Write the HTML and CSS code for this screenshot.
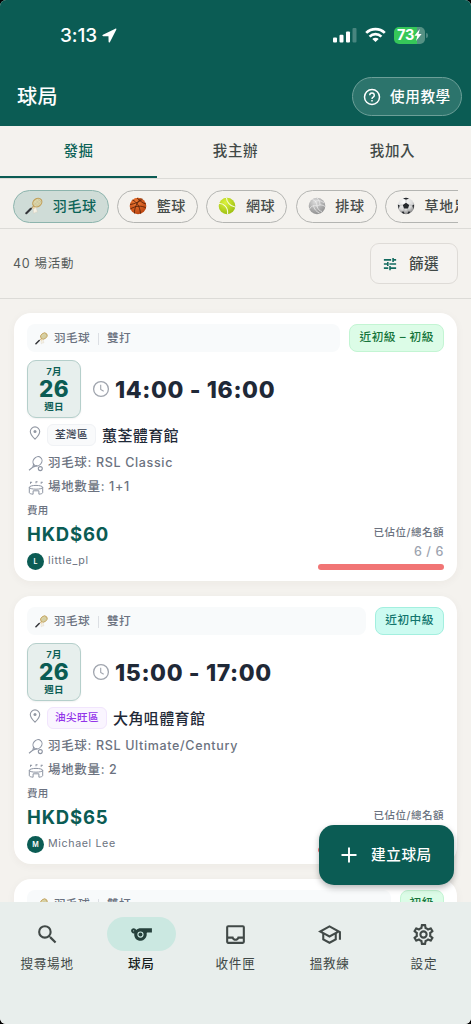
FILE: index.html
```html
<!DOCTYPE html>
<html lang="zh-Hant-HK">
<head>
<meta charset="utf-8">
<meta name="viewport" content="width=device-width, initial-scale=1">
<title>球局</title>
<link rel="stylesheet" href="styles.css">
</head>
<body>
<svg class="defs" width="0" height="0" aria-hidden="true">
  <defs>
    <radialGradient id="gBasket" cx=".4" cy=".3" r=".75"><stop offset="0" stop-color="#f07a35"/><stop offset="1" stop-color="#b8410c"/></radialGradient>
    <radialGradient id="gTennis" cx=".4" cy=".3" r=".8"><stop offset="0" stop-color="#dcf23c"/><stop offset="1" stop-color="#96b90c"/></radialGradient>
    <radialGradient id="gVolley" cx=".4" cy=".25" r=".8"><stop offset="0" stop-color="#dcdcdc"/><stop offset="1" stop-color="#8c8c8c"/></radialGradient>
    <radialGradient id="gSoccer" cx=".4" cy=".25" r=".8"><stop offset="0" stop-color="#fff"/><stop offset=".6" stop-color="#d9d9d9"/><stop offset="1" stop-color="#777"/></radialGradient>
    <symbol id="racket" viewBox="0 0 18 18">
      <path d="M8.7 9.200 6 11.600" stroke="#a08b5b" stroke-width="1.100"/>
      <path d="M5.800 11.800 1.300 16.200" stroke="#34363a" stroke-width="2.100" stroke-linecap="round"/>
      <ellipse cx="12.300" cy="5.600" rx="4.900" ry="3.900" transform="rotate(-38 12.300 5.600)" fill="#ddd6a8" stroke="#c2a05a" stroke-width="1.200"/>
      <path d="m9 5.500 4 4M11 3.500l4 4M13 2l3.200 3.200M9.400 8 15 2.400M11.500 9l5-5" stroke="#b9b492" stroke-width=".4"/>
      <path d="m8.200 11.200 3-.6 1.200 4.400-2 .4-1.800 1z" fill="#f5f1e5" stroke="#d4cbb8" stroke-width=".4"/>
      <circle cx="8.700" cy="10.800" r="1.100" fill="#efcf9a"/>
    </symbol>
    <symbol id="clock" viewBox="0 0 18 18"><circle cx="9" cy="9" r="7.400" fill="none" stroke="#a0a5ae" stroke-width="1.300"/><path d="M8.700 4.700v4.800l3 1.700" fill="none" stroke="#a0a5ae" stroke-width="1.100"/></symbol>
    <symbol id="pin" viewBox="0 0 12 15"><path d="M6 .9a4.700 4.700 0 0 0-4.700 4.700C1.300 8.800 6 13.200 6 13.200s4.700-4.400 4.700-7.600A4.700 4.700 0 0 0 6 .9z" fill="none" stroke="#9298a3" stroke-width="1.100"/><circle cx="6" cy="5.500" r="1.500" fill="#9298a3"/></symbol>
    <symbol id="gear-racket" viewBox="0 0 16 16"><g fill="none" stroke="#8d94a2" stroke-width="1.100"><ellipse cx="9.500" cy="5.300" rx="4.900" ry="4.200" transform="rotate(-50 9.500 5.300)"/><path d="M5.700 7.800 4.800 11.200 1 14.200M4.800 11.200l4.400-1.700"/><circle cx="12.300" cy="12.600" r="2"/></g></symbol>
    <symbol id="stadium" viewBox="0 0 16 16"><g fill="none" stroke="#8d94a2" stroke-width="1"><ellipse cx="8" cy="7.300" rx="6.700" ry="1.900"/><path d="M1.300 7.300v5.200c0 .9 1.500 1.500 3.800 1.700v-3.400h5.800v3.400c2.300-.2 3.800-.8 3.800-1.700V7.300M2.500 1.800v2M8 1.300v2M13.200 1.800v2M2.500 2.300h1.600M8 1.800h1.600M13.200 2.300h1.600"/></g></symbol>
  </defs>
</svg>
<div class="screen">
  <header class="top">
    <div class="status">
      <div class="status-time">3:13
        <svg width="15" height="15" viewBox="0 0 16 16"><path d="M14.200.7 1 7.300c-1 .6-.7 1.500.4 1.500l5.500.1.1 5.600c0 1.100 1 1.300 1.500.4L15.200 1.800c.4-.9-.2-1.500-1-1.100z" fill="#fff"/></svg>
      </div>
      <div class="status-icons">
        <svg width="24" height="16" viewBox="0 0 24 16" fill="#fff"><rect x="0" y="10.500" width="4" height="5" rx="1"/><rect x="6.500" y="7.700" width="4" height="7.800" rx="1"/><rect x="13" y="4.500" width="4" height="11" rx="1"/><rect x="19.500" y="1" width="4" height="14.500" rx="1" opacity=".25"/></svg>
        <svg class="wifi" width="21" height="16" viewBox="0 0 21 16" fill="none" stroke="#fff" stroke-width="2.700"><path d="M1.200 5.900a13.300 13.300 0 0 1 18.600 0M4.600 9.600a8.500 8.500 0 0 1 11.800 0"/><path d="M10.500 15 7.300 12a4.600 4.600 0 0 1 6.400 0z" fill="#fff" stroke="none"/></svg>
        <div class="battery"><span>73</span><svg width="8" height="12" viewBox="0 0 8 12"><path d="M5.800 0 .4 6.700h2.900L2 12l5.600-7H4.500z" fill="#fff"/></svg></div>
        <i class="battery-tip"></i>
      </div>
    </div>
    <div class="appbar">
      <h1>球局</h1>
      <button class="help">
        <svg width="18" height="18" viewBox="0 0 18 18" fill="none" stroke="#fff" stroke-width="1.500"><circle cx="9" cy="9" r="7.500"/><path d="M6.700 7.200a2.300 2.300 0 1 1 3.500 2c-.8.500-1.200.9-1.200 1.800"/><path d="M9 12v1.600"/></svg>
        <span>使用教學</span>
      </button>
    </div>
  </header>
  <nav class="tabs"><span class="tab active">發掘</span><span class="tab">我主辦</span><span class="tab">我加入</span></nav>
  <div class="chips">
    <div class="chip-track">
      <span class="chip selected"><svg width="18" height="18"><use href="#racket"/></svg>羽毛球</span>
      <span class="chip"><svg width="18" height="18" viewBox="0 0 18 18"><circle cx="9" cy="9" r="8.300" fill="url(#gBasket)"/><path d="M3.500 3c4 1.500 7.500 6.500 8 13.700M8 .9C11 4 14.500 6.500 17 7M1 7.500C6 7 11.500 4 13.500 2.100M1.300 12C6 9 12.500 8 17 11M5.500 16.500C5 12 8 5 12 1.500" fill="none" stroke="#4e1d08" stroke-width=".8"/></svg>籃球</span>
      <span class="chip"><svg width="18" height="18" viewBox="0 0 18 18"><circle cx="9" cy="9" r="8.300" fill="url(#gTennis)"/><path d="M1 6.500c4.500-.5 9.500 4 8.500 10.500M8.500 1c0 3.500 3.500 8.500 8.500 9" fill="none" stroke="#f6fbd8" stroke-width="1.100"/></svg>網球</span>
      <span class="chip"><svg width="18" height="18" viewBox="0 0 18 18"><circle cx="9" cy="9" r="8.300" fill="url(#gVolley)"/><path d="M9 9C6 8 3 9 1.500 12M9 9c0-3-1.500-5.500-4.500-6.500M9 9c2.500-1.500 5.500-1.500 8 .5M7 4.500C10 3 13 3.500 16 6M12 8c0-3-1-5-3-7M5.500 8.500c.5 3.500 2.500 6 6 7.500M9 9c.5 3 2.500 5 5 5.500" fill="none" stroke="#f0f0f0" stroke-width=".7"/></svg>排球</span>
      <span class="chip"><svg width="18" height="18" viewBox="0 0 18 18"><circle cx="9" cy="9" r="8.300" fill="url(#gSoccer)"/><path d="m9 5.700 3.200 2.200-1.200 3.700H7L5.800 7.900zM6 1.400 9 2.700l3-1.300A8 8 0 0 0 6 1.400zM.8 7.500l2 .9L1.600 12zM17.200 7.500l-2 .9 1.200 3.600zM4.500 14.700l2.300-.1.800 2.500c-1.300-.3-2.300-1.100-3.100-2.400zM13.500 14.700l-2.300-.1-.8 2.500c1.300-.3 2.300-1.100 3.100-2.400z" fill="#25282c"/><path d="M9 2.500v3.200M3 8.300l2.800-.4M15 8.300l-2.800-.4M7 11.600v2.800M11 11.600v2.800" stroke="#999" stroke-width=".5"/></svg>草地足球</span>
    </div>
  </div>
  <div class="toolbar">
    <span class="count">40 場活動</span>
    <button class="filter"><svg width="14" height="14" viewBox="0 0 16 16" fill="none" stroke="#126a5f" stroke-width="1.800"><path d="M1 3.300h8.300M11.500 1v4.600M11.500 3.300H15M1 8h3.800M5.500 5.700v4.600M7.300 8H15M1 12.700h5M8 10.400V15M8 12.700h7"/></svg><span>篩選</span></button>
  </div>
  <main class="list">
    <article class="card">
      <div class="card-head"><div class="kind"><svg width="13" height="13"><use href="#racket"/></svg><span>羽毛球</span><i></i><span>雙打</span></div><span class="level green">近初級 – 初級</span></div>
      <div class="when"><div class="date"><span>7月</span><b>26</b><span>週日</span></div><svg width="18" height="18"><use href="#clock"/></svg><strong>14:00 - 16:00</strong></div>
      <div class="place"><svg width="12" height="15"><use href="#pin"/></svg><span class="district">荃灣區</span><span class="venue">蕙荃體育館</span></div>
      <div class="info"><svg width="16" height="16"><use href="#gear-racket"/></svg><span>羽毛球: RSL Classic</span></div>
      <div class="info"><svg width="16" height="16"><use href="#stadium"/></svg><span>場地數量: 1+1</span></div>
      <div class="foot">
        <div class="fee"><span class="small">費用</span><span class="price">HKD$60</span><div class="host"><span class="avatar">L</span><span>little_pl</span></div></div>
        <div class="seats"><span class="small">已佔位/總名額</span><span class="num">6 / 6</span><span class="bar"></span></div>
      </div>
    </article>
    <article class="card">
      <div class="card-head"><div class="kind"><svg width="13" height="13"><use href="#racket"/></svg><span>羽毛球</span><i></i><span>雙打</span></div><span class="level teal">近初中級</span></div>
      <div class="when"><div class="date"><span>7月</span><b>26</b><span>週日</span></div><svg width="18" height="18"><use href="#clock"/></svg><strong>15:00 - 17:00</strong></div>
      <div class="place"><svg width="12" height="15"><use href="#pin"/></svg><span class="district purple">油尖旺區</span><span class="venue">大角咀體育館</span></div>
      <div class="info"><svg width="16" height="16"><use href="#gear-racket"/></svg><span>羽毛球: RSL Ultimate/Century</span></div>
      <div class="info"><svg width="16" height="16"><use href="#stadium"/></svg><span>場地數量: 2</span></div>
      <div class="foot">
        <div class="fee"><span class="small">費用</span><span class="price">HKD$65</span><div class="host"><span class="avatar">M</span><span>Michael Lee</span></div></div>
        <div class="seats"><span class="small">已佔位/總名額</span><span class="num"></span><span class="bar"></span></div>
      </div>
    </article>
    <article class="card">
      <div class="card-head"><div class="kind"><svg width="13" height="13"><use href="#racket"/></svg><span>羽毛球</span><i></i><span>雙打</span></div><span class="level green">初級</span></div>
    </article>
  </main>
  <button class="fab"><svg width="16" height="16" viewBox="0 0 16 16"><path d="M8 .5v15M.5 8h15" stroke="#fff" stroke-width="1.900"/></svg><span>建立球局</span></button>
  <nav class="bottom">
    <a class="item"><span class="ico"><svg width="25" height="25" viewBox="0 0 24 24"><path fill="#414947" d="M15.500 14h-.79l-.28-.27A6.470 6.470 0 0 0 16 9.500 6.500 6.500 0 1 0 9.500 16c1.610 0 3.090-.59 4.230-1.570l.27.28v.79l5 4.990L20.490 19zm-6 0a4.500 4.500 0 1 1 0-9 4.500 4.500 0 0 1 0 9z"/></svg></span><span>搜尋場地</span></a>
    <a class="item current"><span class="ico"><svg width="25" height="25" viewBox="0 0 24 24"><path fill="#26413c" fill-rule="evenodd" d="M11.230 6c-1.660 0-3.220.66-4.360 1.730C6.540 6.730 5.610 6 4.500 6 3.120 6 2 7.120 2 8.500S3.120 11 4.500 11c.21 0 .41-.03.610-.08-.05.25-.09.51-.1.780-.18 3.680 2.950 6.680 6.680 6.270 2.550-.28 4.680-2.260 5.190-4.770.15-.71.150-1.400.060-2.060-.09-.6.380-1.130.990-1.130H22V6H11.230zM4.500 9a.5.5 0 1 1 0-1 .5.5 0 0 1 0 1zM11 15a3 3 0 1 1 0-6 3 3 0 0 1 0 6z"/><circle cx="11" cy="12" r="1.900" fill="#26413c"/></svg></span><span>球局</span></a>
    <a class="item"><span class="ico"><svg width="25" height="25" viewBox="0 0 24 24"><path fill="#414947" d="M19 3H5a2 2 0 0 0-2 2v14c0 1.100.9 2 2 2h14a2 2 0 0 0 2-2V5a2 2 0 0 0-2-2zm0 16H5v-3h3.560c.69 1.190 1.970 2 3.450 2s2.750-.81 3.450-2H19v3zm0-5h-4.990c0 1.100-.9 2-2 2s-2-.9-2-2H5V5h14v9z"/></svg></span><span>收件匣</span></a>
    <a class="item"><span class="ico"><svg width="25" height="25" viewBox="0 0 24 24"><path fill="#414947" d="M12 3 1 9l4 2.180v6L12 21l7-3.820v-6l2-1.090V17h2V9L12 3zm6.820 6L12 12.720 5.180 9 12 5.280 18.820 9zM17 15.990l-5 2.730-5-2.730v-3.720L12 15l5-2.730v3.720z"/></svg></span><span>搵教練</span></a>
    <a class="item"><span class="ico"><svg width="25" height="25" viewBox="0 0 24 24"><path fill="#414947" d="M19.430 12.980c.04-.32.070-.64.070-.98 0-.34-.03-.66-.07-.98l2.110-1.650c.19-.15.240-.42.120-.64l-2-3.460a.5.5 0 0 0-.61-.22l-2.490 1c-.52-.4-1.080-.73-1.690-.98l-.38-2.650A.488.488 0 0 0 14 2h-4c-.25 0-.46.180-.49.420l-.38 2.650c-.61.250-1.170.590-1.690.98l-2.490-1a.5.5 0 0 0-.61.220l-2 3.460c-.13.220-.07.490.120.640l2.110 1.650c-.04.320-.07.650-.07.980s.03.660.070.980l-2.110 1.650c-.19.150-.24.420-.12.640l2 3.460c.12.220.390.300.610.220l2.490-1c.52.400 1.080.730 1.690.980l.38 2.650c.03.240.240.420.490.420h4c.25 0 .46-.18.490-.42l.38-2.650c.61-.25 1.170-.59 1.690-.98l2.490 1c.23.090.49 0 .61-.22l2-3.460c.12-.22.070-.49-.12-.64l-2.110-1.650zm-1.980-1.710c.04.310.050.520.050.730 0 .21-.02.430-.05.730l-.14 1.130.89.700 1.080.84-.7 1.210-1.270-.51-1.040-.42-.9.680c-.43.320-.84.560-1.250.73l-1.060.43-.16 1.130-.2 1.350h-1.400l-.35-2.480-1.060-.43c-.43-.18-.83-.41-1.230-.71l-.91-.7-1.060.43-1.270.51-.7-1.210 1.080-.84.890-.7-.14-1.130A7.600 7.600 0 0 1 6.500 12c0-.2.020-.43.050-.73l.14-1.130-.89-.7-1.080-.84.7-1.210 1.270.51 1.040.42.900-.68c.43-.32.840-.56 1.250-.73l1.060-.43.160-1.130.2-1.350h1.390l.35 2.480 1.060.43c.43.180.830.410 1.230.71l.91.700 1.060-.43 1.270-.51.700 1.210-1.070.85-.89.700.14 1.130zM12 8a4 4 0 1 0 0 8 4 4 0 0 0 0-8zm0 6a2 2 0 1 1 0-4 2 2 0 0 1 0 4z"/></svg></span><span>設定</span></a>
  </nav>
</div>
</body>
</html>
```
FILE: styles.css
```css
* { box-sizing: border-box; }
body { margin: 0; background: #000; font-family: Inter, "Noto Sans CJK TC", sans-serif; line-height: 1; }
button { font: inherit; border: 0; margin: 0; padding: 0; }
svg { display: block; flex: none; }
span { white-space: nowrap; }
.defs { position: absolute; }
.screen { position: relative; width: 471px; height: 1024px; overflow: hidden; border-radius: 6px; background: #f4f2ee; display: flex; flex-direction: column; }

.top { height: 126px; flex: none; background: #0b5c54; color: #fff; }
.status { height: 67px; padding: 3px 43px 0 60px; display: flex; justify-content: space-between; align-items: center; }
.status-time { display: flex; align-items: center; gap: 5px; font-size: 19px; font-weight: 500; letter-spacing: -.1px; }
.status-icons { display: flex; align-items: center; }
.wifi { margin: 0 8px 0 8px; }
.battery { width: 31px; height: 17px; border-radius: 5px; background: linear-gradient(90deg, #36c759 74%, #559184 74%); display: flex; align-items: center; justify-content: center; font-size: 14.500px; font-weight: 700; letter-spacing: -.3px; }
.battery-tip { width: 2px; height: 5px; margin-left: 1px; border-radius: 0 2px 2px 0; background: #4b8780; }
.appbar { height: 59px; padding: 0 9px 0 17px; display: flex; align-items: center; justify-content: space-between; }
h1 { margin: 0; padding-top: 1px; font-size: 20px; font-weight: 500; letter-spacing: .4px; }
.help { width: 110px; height: 39px; border: 1px solid #6c9f98; border-radius: 20px; background: #2c746c; color: #fff; display: flex; align-items: center; padding: 1px 0 0 10px; gap: 9px; font-size: 14.600px; font-weight: 500; letter-spacing: .6px; }

.tabs { height: 53px; flex: none; display: grid; grid-template-columns: repeat(3, 1fr); border-bottom: 1px solid #dcdbd7; }
.tab { height: 52px; display: flex; align-items: center; justify-content: center; padding-top: 1px; font-size: 14.500px; font-weight: 500; letter-spacing: .6px; color: #414947; border-bottom: 2px solid transparent; }
.tab.active { color: #0b6357; border-color: #0b5c54; }

.chips { height: 50px; flex: none; padding: 0 13px; border-bottom: 1px solid #dcdbd7; }
.chip-track { height: 49px; display: flex; align-items: center; gap: 8.300px; overflow: hidden; padding-top: 5px; }
.chip { height: 33px; flex: none; border: 1px solid #b4b5b2; border-radius: 17px; padding: 0 11px; display: flex; align-items: center; gap: 9.800px; font-size: 14px; font-weight: 500; letter-spacing: .6px; color: #464c4a; }
.chip.selected { background: #cfdcd7; border-color: #8db4ad; color: #0b6357; }

.toolbar { height: 70px; flex: none; border-bottom: 1px solid #dcdbd7; padding: 0 13px; display: flex; align-items: center; justify-content: space-between; }
.count { padding-top: 2px; font-size: 12.500px; letter-spacing: .7px; color: #555b59; }
.filter { width: 88px; height: 41px; border: 1px solid #dedbd7; border-radius: 9px; background: #f5f3f0; display: flex; align-items: center; padding: 1px 0 0 12px; gap: 12px; font-size: 14.600px; font-weight: 500; letter-spacing: .4px; color: #414947; }

.list { padding: 14px 14px 0 14px; height: 603px; flex: none; overflow: hidden; }
.card { height: 268px; margin-bottom: 15px; border-radius: 17px; background: #fff; box-shadow: 0 2px 10px rgba(60, 45, 20, .045); padding: 11px 13px 0; }
.card-head { display: flex; gap: 9px; height: 28px; align-items: stretch; }
.kind { flex: 1; background: #f8fafb; border-radius: 8px; padding: 1px 0 0 8px; display: flex; align-items: center; font-size: 11.600px; font-weight: 500; letter-spacing: .4px; color: #6b7280; }
.kind svg { margin-right: 6px; }
.kind i { width: 1px; height: 12px; background: #dcdfe4; margin: 0 8px; }
.level { border-radius: 8px; padding: 0 9px; border: 1px solid; display: flex; align-items: center; font-size: 11.700px; font-weight: 500; letter-spacing: .5px; }
.green { background: #dcfce7; border-color: #c3f5d3; color: #16753b; }
.teal { background: #ccfbf1; border-color: #a3efdf; color: #12766e; }
.when { height: 58px; margin-top: 8px; display: flex; align-items: center; }
.when svg { margin: 0 5px 0 11px; }
.when strong { padding-top: 2px; font-size: 23px; font-weight: 800; letter-spacing: .62px; color: #1f2937; }
.date { width: 54px; height: 58px; border: 1px solid #b5cfcb; border-radius: 9px; background: #e7efed; color: #0b5c54; display: flex; flex-direction: column; align-items: center; padding-top: 5px; font-size: 9.500px; font-weight: 600; letter-spacing: .3px; box-shadow: 0 1px 2px rgba(0, 0, 0, .06); }
.date span { height: 11px; line-height: 11px; }
.date b { font-size: 22.500px; line-height: 24px; font-weight: 800; }
.place { height: 33px; display: flex; align-items: center; padding: 1px 0 0 2px; }
.place svg { margin: -4px 6px 0 0; }
.district { height: 22px; border: 1px solid #f0f2f5; border-radius: 6px; background: #f9fafb; color: #374151; padding: 1px 7px 0; display: flex; align-items: center; font-size: 10.600px; font-weight: 500; letter-spacing: .4px; margin-right: 6px; }
.purple { background: #faf5ff; border-color: #f1e5fd; color: #9333ea; }
.venue { font-size: 15px; font-weight: 500; letter-spacing: .4px; color: #1f2937; }
.info { height: 25px; display: flex; align-items: center; gap: 4px; font-size: 12.500px; font-weight: 450; letter-spacing: .66px; color: #6b7280; padding-left: 1px; }
.info:nth-of-type(5) { margin-top: -1px; margin-bottom: 1px; }
.foot { display: flex; justify-content: space-between; }
.small { font-size: 10.500px; font-weight: 500; letter-spacing: .35px; color: #6b7280; }
.fee { display: flex; flex-direction: column; }
.fee .small { height: 20px; line-height: 20px; }
.price { height: 26px; line-height: 26px; font-size: 18.500px; font-weight: 700; letter-spacing: .85px; color: #0b5c54; }
.host { height: 28px; display: flex; align-items: center; gap: 4px; font-size: 10.700px; letter-spacing: .62px; color: #6b7280; }
.avatar { width: 17px; height: 17px; border-radius: 50%; background: #0b5c54; color: #fff; font-size: 7px; font-weight: 600; letter-spacing: 0; display: flex; align-items: center; justify-content: center; }
.seats { width: 126px; display: flex; flex-direction: column; align-items: flex-end; padding-top: 21px; }
.seats .small { height: 21px; line-height: 21px; letter-spacing: .5px; }
.num { height: 20px; line-height: 18px; font-size: 12.500px; font-weight: 500; letter-spacing: .6px; color: #9ca3af; }
.bar { width: 126px; height: 6px; border-radius: 3px; background: #f17575; margin-top: 1px; }

.fab { position: absolute; left: 319px; top: 825px; width: 135px; height: 60px; border-radius: 15px; background: #0b5c54; color: #fff; box-shadow: 0 3px 6px rgba(0, 0, 0, .28); display: flex; align-items: center; padding-left: 22px; gap: 14px; font-size: 14.600px; font-weight: 500; letter-spacing: .6px; }

.bottom { height: 122px; flex: none; background: #e8eeec; display: grid; grid-template-columns: repeat(5, 1fr); align-items: start; padding-top: 15px; }
.item { display: flex; flex-direction: column; align-items: center; gap: 4px; font-size: 12.600px; font-weight: 400; letter-spacing: .7px; color: #414947; line-height: 18px; }
.ico { width: 69px; height: 34px; border-radius: 17px; display: flex; align-items: center; justify-content: center; }
.current { color: #171d1b; font-weight: 500; }
.current .ico { background: #cbe8e1; }
```
